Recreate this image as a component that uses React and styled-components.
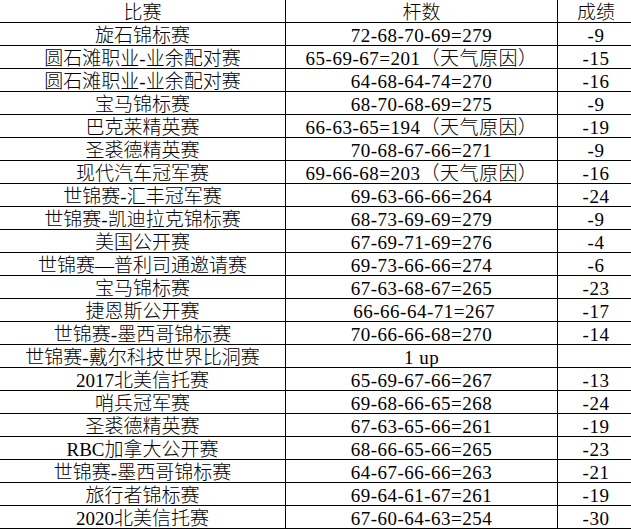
import React from 'react';
import styled, { createGlobalStyle } from 'styled-components';

const GlobalStyle = createGlobalStyle`
  html, body {
    margin: 0;
    padding: 0;
    background: #fff;
    overflow: hidden;
  }
`;

const Sheet = styled.div`
  width: 631px;
  font-family: "Liberation Serif", "Noto Sans CJK SC", serif;
  font-size: 19px;
  font-weight: 300;
  color: #000;
`;

const Row = styled.div`
  display: grid;
  grid-template-columns: 286px 272px 1fr;
  border-bottom: 1px solid #000;
`;

const Cell = styled.div`
  box-sizing: border-box;
  height: 22px;
  padding-top: 3px;
  padding-left: ${(p) => (p.$last ? '3px' : '0')};
  line-height: 19px;
  text-align: center;
  white-space: pre;
  letter-spacing: ${(p) => (p.$num ? '0.5px' : '0')};
  border-right: ${(p) => (p.$last ? 'none' : '1px solid #000')};
`;

const rows = [
  ['旋石锦标赛', '72-68-70-69=279', '-9'],
  ['圆石滩职业-业余配对赛', '65-69-67=201（天气原因）', '-15'],
  ['圆石滩职业-业余配对赛', '64-68-64-74=270', '-16'],
  ['宝马锦标赛', '68-70-68-69=275', '-9'],
  ['巴克莱精英赛', '66-63-65=194（天气原因）', '-19'],
  ['圣裘德精英赛', '70-68-67-66=271', '-9'],
  ['现代汽车冠军赛', '69-66-68=203（天气原因）', '-16'],
  ['世锦赛-汇丰冠军赛', '69-63-66-66=264', '-24'],
  ['世锦赛-凯迪拉克锦标赛', '68-73-69-69=279', '-9'],
  ['美国公开赛', '67-69-71-69=276', '-4'],
  ['世锦赛—普利司通邀请赛', '69-73-66-66=274', '-6'],
  ['宝马锦标赛', '67-63-68-67=265', '-23'],
  ['捷恩斯公开赛', ' 66-66-64-71=267', '-17'],
  ['世锦赛-墨西哥锦标赛', '70-66-66-68=270', '-14'],
  ['世锦赛-戴尔科技世界比洞赛', '1 up', ''],
  ['2017北美信托赛', '65-69-67-66=267', '-13'],
  ['哨兵冠军赛', '69-68-66-65=268', '-24'],
  ['圣裘德精英赛', '67-63-65-66=261', '-19'],
  ['RBC加拿大公开赛', '68-66-65-66=265', '-23'],
  ['世锦赛-墨西哥锦标赛', '64-67-66-66=263', '-21'],
  ['旅行者锦标赛', '69-64-61-67=261', '-19'],
  ['2020北美信托赛', '67-60-64-63=254', '-30'],
];

const App = () => (
  <>
    <GlobalStyle />
    <Sheet>
      <Row>
        <Cell>比赛</Cell>
        <Cell>杆数</Cell>
        <Cell $last>成绩</Cell>
      </Row>
      {rows.map(([name, strokes, score], index) => (
        <Row key={index}>
          <Cell>{name}</Cell>
          <Cell $num>{strokes}</Cell>
          <Cell $last $num>{score}</Cell>
        </Row>
      ))}
    </Sheet>
  </>
);

export default App;
